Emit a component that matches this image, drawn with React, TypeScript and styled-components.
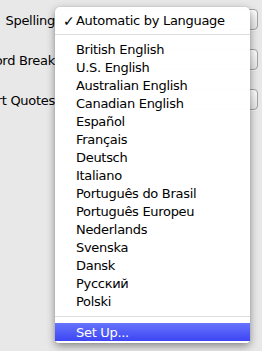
import React from "react";
import styled, {createGlobalStyle} from "styled-components";

const GlobalStyle = createGlobalStyle`
	html, body {
		margin: 0;
		padding: 0;
		background: #e8e8e8;
		overflow: hidden;
	}
	body {
		font-family: "DejaVu Sans", "Liberation Sans", sans-serif;
		font-size: 13px;
		letter-spacing: -0.3px;
		color: #000;
	}
`;

const Page = styled.div`
	position: relative;
	width: 262px;
	height: 351px;
	background: #e8e8e8;
	overflow: hidden;
`;

const Form = styled.div`
	display: flex;
	flex-direction: column;
	gap: 19px;
	padding-top: 9px;
`;

const Row = styled.div`
	display: flex;
	align-items: center;
	gap: 3px;
	height: 21px;
`;

const Label = styled.div`
	width: 59px;
	display: flex;
	justify-content: flex-end;
	white-space: nowrap;
	flex-shrink: 0;
	padding-top: 1px;
`;

const PopUp = styled.div`
	width: 194px;
	height: 19px;
	border: 1px solid #a3a3a3;
	border-radius: 4px;
	background: linear-gradient(#ffffff, #f1f1f1 50%, #e4e4e4);
	box-shadow: 0 1px 0 rgba(255,255,255,0.6);
`;

const Menu = styled.div`
	position: absolute;
	left: 55px;
	top: 7px;
	width: 195px;
	padding: 4px 0 2px;
	background: rgba(255,255,255,0.98);
	border-radius: 5px 5px 4px 4px;
	box-shadow: 0 3px 9px rgba(0,0,0,0.42), 0 0 1px rgba(0,0,0,0.25);
`;

const Item = styled.div<{$active?: boolean}>`
	display: grid;
	grid-template-columns: 21px 1fr;
	align-items: center;
	box-sizing: border-box;
	height: 18px;
	padding-top: 2px;
	line-height: 16px;
	white-space: nowrap;
	color: ${p => p.$active ? "#fff" : "#000"};
	background: ${p => p.$active ? "linear-gradient(#6675fc, #3d45f3)" : "transparent"};
`;

const Check = styled.span`
	padding-left: 8px;
	font-size: 14px;
	line-height: 16px;
`;

const Separator = styled.div<{$h: number}>`
	height: ${p => p.$h}px;
	display: flex;
	flex-direction: column;
	justify-content: center;
	&::after {
		content: "";
		height: 1px;
		background: #dedede;
	}
`;

const languages = [
	"British English",
	"U.S. English",
	"Australian English",
	"Canadian English",
	"Español",
	"Français",
	"Deutsch",
	"Italiano",
	"Português do Brasil",
	"Português Europeu",
	"Nederlands",
	"Svenska",
	"Dansk",
	"Русский",
	"Polski",
];

export default function App() {
	return (
		<Page>
			<GlobalStyle/>
			<Form>
				<Row><Label>Spelling:</Label><PopUp/></Row>
				<Row><Label>Word Break:</Label><PopUp/></Row>
				<Row><Label>Smart Quotes:</Label><PopUp/></Row>
			</Form>
			<Menu>
				<Item><Check>✓</Check><span>Automatic by Language</span></Item>
				<Separator $h={11}/>
				{languages.map(lang => (
					<Item key={lang}><span/><span>{lang}</span></Item>
				))}
				<Separator $h={13}/>
				<Item $active><span/><span>Set Up...</span></Item>
			</Menu>
		</Page>
	);
}
